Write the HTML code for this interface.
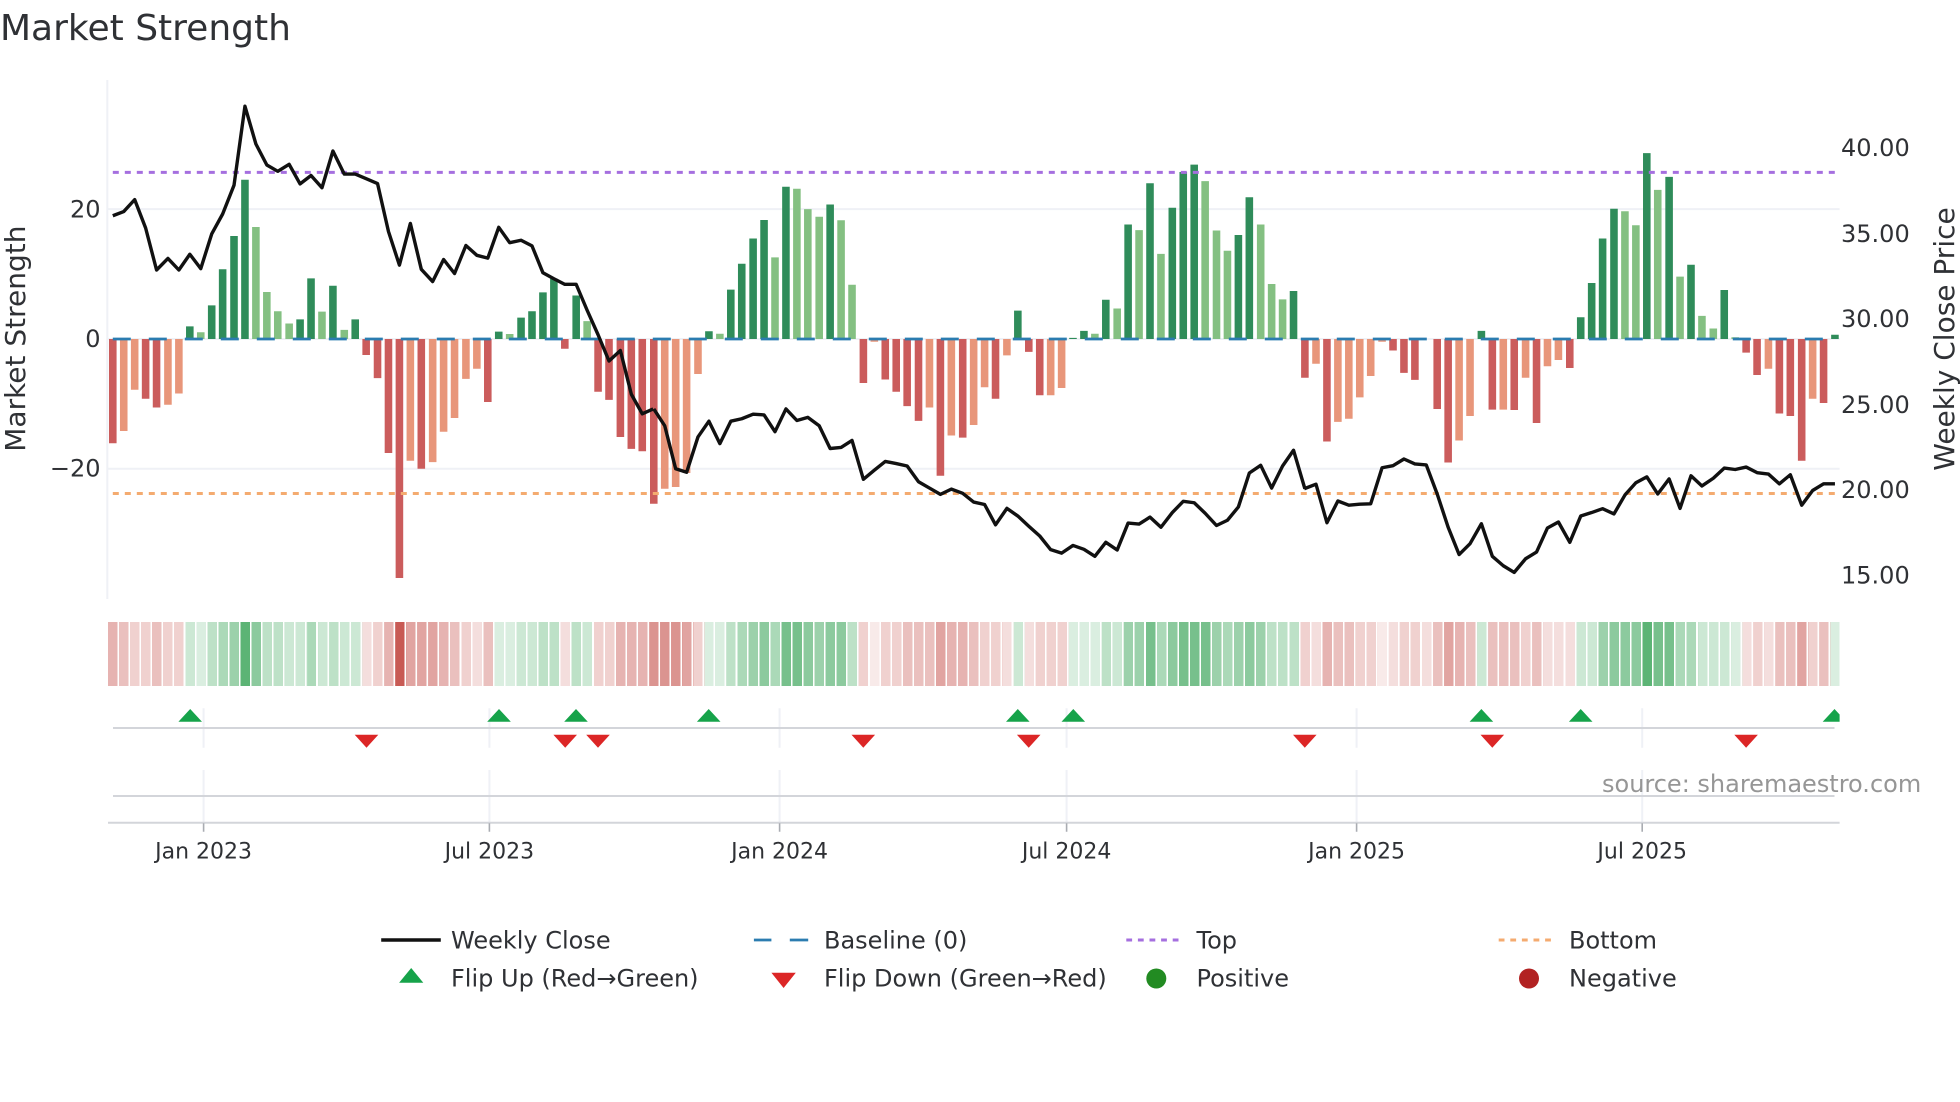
<!DOCTYPE html>
<html><head><meta charset="utf-8"><style>
html,body{margin:0;padding:0;background:#fff}
body{width:1960px;height:1102px;overflow:hidden;position:relative;font-family:"DejaVu Sans",sans-serif}
svg{position:absolute;left:0;top:0}
text{font-family:"DejaVu Sans",sans-serif;fill:#2f3135}
.s{position:absolute;left:108.1px;top:622px;height:64px;display:flex;width:1740px;transform:scaleX(1.0008);transform-origin:0 0}
.s i{display:block;flex:none;width:11.03125px;height:64px}
.o{position:absolute;left:108px;top:622px;height:64px;width:1731.7px;background:repeating-linear-gradient(90deg,transparent 0,transparent 9.5px,#fff 9.5px,#fff 11.04px)}
.c{position:absolute;left:1839.7px;top:622px;width:30px;height:64px;background:#fff}
.r1{background:rgba(200,90,84,.13)}.r2{background:rgba(200,90,84,.2)}.r3{background:rgba(200,90,84,.28)}.r4{background:rgba(200,90,84,.38)}.r5{background:rgba(200,90,84,.46)}.r6{background:rgba(200,90,84,.55)}.r7{background:rgba(200,90,84,.65)}.r8{background:rgba(200,90,84,.75)}.r10{background:rgb(200,90,84)}
.g1{background:rgba(35,154,69,.17)}.g2{background:rgba(35,154,69,.23)}.g3{background:rgba(35,154,69,.3)}.g4{background:rgba(35,154,69,.38)}.g5{background:rgba(35,154,69,.45)}.g6{background:rgba(35,154,69,.52)}.g7{background:rgba(35,154,69,.62)}.g8{background:rgba(35,154,69,.74)}
</style></head><body>
<div class="s"><i class="r5"></i><i class="r4"></i><i class="r3"></i><i class="r3"></i><i class="r4"></i><i class="r3"></i><i class="r3"></i><i class="g2"></i><i class="g1"></i><i class="g3"></i><i class="g4"></i><i class="g5"></i><i class="g8"></i><i class="g6"></i><i class="g3"></i><i class="g3"></i><i class="g2"></i><i class="g2"></i><i class="g4"></i><i class="g2"></i><i class="g3"></i><i class="g2"></i><i class="g2"></i><i class="r2"></i><i class="r3"></i><i class="r5"></i><i class="r10"></i><i class="r6"></i><i class="r6"></i><i class="r6"></i><i class="r5"></i><i class="r4"></i><i class="r3"></i><i class="r2"></i><i class="r4"></i><i class="g1"></i><i class="g1"></i><i class="g2"></i><i class="g2"></i><i class="g3"></i><i class="g3"></i><i class="r2"></i><i class="g3"></i><i class="g2"></i><i class="r3"></i><i class="r3"></i><i class="r5"></i><i class="r5"></i><i class="r5"></i><i class="r7"></i><i class="r7"></i><i class="r7"></i><i class="r6"></i><i class="r3"></i><i class="g1"></i><i class="g1"></i><i class="g3"></i><i class="g4"></i><i class="g5"></i><i class="g6"></i><i class="g4"></i><i class="g7"></i><i class="g7"></i><i class="g6"></i><i class="g5"></i><i class="g6"></i><i class="g6"></i><i class="g3"></i><i class="r3"></i><i class="r1"></i><i class="r3"></i><i class="r3"></i><i class="r4"></i><i class="r4"></i><i class="r4"></i><i class="r6"></i><i class="r5"></i><i class="r5"></i><i class="r4"></i><i class="r3"></i><i class="r3"></i><i class="r2"></i><i class="g2"></i><i class="r2"></i><i class="r3"></i><i class="r3"></i><i class="r3"></i><i class="g1"></i><i class="g1"></i><i class="g1"></i><i class="g3"></i><i class="g2"></i><i class="g5"></i><i class="g5"></i><i class="g7"></i><i class="g4"></i><i class="g6"></i><i class="g7"></i><i class="g7"></i><i class="g7"></i><i class="g5"></i><i class="g4"></i><i class="g5"></i><i class="g6"></i><i class="g5"></i><i class="g3"></i><i class="g3"></i><i class="g3"></i><i class="r3"></i><i class="r2"></i><i class="r5"></i><i class="r4"></i><i class="r4"></i><i class="r3"></i><i class="r3"></i><i class="r1"></i><i class="r2"></i><i class="r3"></i><i class="r3"></i><i class="r2"></i><i class="r4"></i><i class="r6"></i><i class="r5"></i><i class="r4"></i><i class="g2"></i><i class="r4"></i><i class="r4"></i><i class="r4"></i><i class="r3"></i><i class="r4"></i><i class="r2"></i><i class="r2"></i><i class="r2"></i><i class="g2"></i><i class="g2"></i><i class="g5"></i><i class="g6"></i><i class="g6"></i><i class="g6"></i><i class="g8"></i><i class="g7"></i><i class="g7"></i><i class="g4"></i><i class="g4"></i><i class="g2"></i><i class="g2"></i><i class="g2"></i><i class="g1"></i><i class="r2"></i><i class="r3"></i><i class="r2"></i><i class="r4"></i><i class="r4"></i><i class="r6"></i><i class="r3"></i><i class="r4"></i><i class="g1"></i></div>
<div class="o"></div><div class="c"></div>
<svg width="1960" height="1102" viewBox="0 0 1960 1102" xmlns="http://www.w3.org/2000/svg">
<!-- grid -->
<g stroke="#eff1f6" stroke-width="2" fill="none">
<path d="M107.3 80V599M107.3 209.1H1839.6M107.3 468.8H1839.6M107.3 339H1839.6"/>
<path d="M203.6 708.3V747.7M489.4 708.3V747.7M779.6 708.3V747.7M1066.6 708.3V747.7M1356.6 708.3V747.7M1642.2 708.3V747.7M203.6 770V822.7M489.4 770V822.7M779.6 770V822.7M1066.6 770V822.7M1356.6 770V822.7M1642.2 770V822.7"/>
</g>
<!-- bars crop 1 -->
<g transform="translate(0,60) scale(.42088,.35)">
<path fill="#cb5c5c" d="M259 797V1095h18V797zM337 797V968h18V797zM363 797V993h18V797zM861 797V843h18V797zM888 797V909h18V797zM914 797V1123h18V797zM940 797V1480h18V797zM992 797V1168h18V797zM1150 797V977h18V797zM1333 797V825h18V797zM1412 797V948h18V797zM1438 797V971h18V797zM1465 797V1077h18V797zM1491 797V1111h18V797zM1517 797V1118h18V797z"/>
<path fill="#e8967a" d="M285 797V1060h18V797zM311 797V942h18V797zM390 797V985h18V797zM416 797V953h18V797zM966 797V1145h18V797zM1019 797V1149h18V797zM1045 797V1062h18V797zM1071 797V1023h18V797zM1098 797V911h18V797zM1124 797V882h18V797z"/>
<path fill="#2f8c5a" d="M442 797V761h18V797zM494 797V701h18V797zM520 797V598h18V797zM547 797V503h18V797zM573 797V342h18V797zM704 797V741h18V797zM730 797V624h18V797zM782 797V645h18V797zM835 797V741h18V797zM1176 797V776h18V797zM1229 797V736h18V797zM1255 797V718h18V797zM1281 797V664h18V797zM1307 797V625h18V797zM1360 797V673h18V797z"/>
<path fill="#84c082" d="M468 797V778h18V797zM599 797V477h18V797zM625 797V663h18V797zM651 797V718h18V797zM678 797V753h18V797zM756 797V719h18V797zM809 797V771h18V797zM1202 797V783h18V797zM1386 797V746h18V797z"/>
</g>
<!-- bars crop 2 -->
<g transform="translate(650,60) scale(.42088,.35)">
<path fill="#cb5c5c" d="M0 797V1268h18V797zM498 797V923h18V797zM550 797V913h18V797zM576 797V948h18V797zM602 797V989h18V797zM629 797V1031h18V797zM681 797V1188h18V797zM734 797V1079h18V797zM812 797V968h18V797zM891 797V834h18V797zM917 797V958h18V797zM1547 797V908h18V797z"/>
<path fill="#e8967a" d="M26 797V1225h18V797zM52 797V1220h18V797zM78 797V1180h18V797zM105 797V897h18V797zM524 797V805h18V797zM655 797V993h18V797zM707 797V1073h18V797zM760 797V1043h18V797zM786 797V935h18V797zM839 797V844h18V797zM943 797V958h18V797zM969 797V937h18V797z"/>
<path fill="#2f8c5a" d="M131 797V775h18V797zM183 797V656h18V797zM209 797V582h18V797zM236 797V510h18V797zM262 797V457h18V797zM314 797V362h18V797zM419 797V413h18V797zM865 797V716h18V797zM1022 797V774h18V797zM1074 797V685h18V797zM1127 797V470h18V797zM1179 797V352h18V797zM1232 797V422h18V797zM1258 797V320h18V797zM1284 797V299h18V797zM1389 797V500h18V797zM1415 797V392h18V797zM1520 797V660h18V797zM996 797V794h18V797z"/>
<path fill="#84c082" d="M157 797V782h18V797zM288 797V564h18V797zM340 797V368h18V797zM366 797V426h18V797zM393 797V448h18V797zM445 797V458h18V797zM471 797V642h18V797zM1048 797V782h18V797zM1101 797V710h18V797zM1153 797V486h18V797zM1205 797V554h18V797zM1310 797V346h18V797zM1337 797V487h18V797zM1363 797V545h18V797zM1442 797V470h18V797zM1468 797V640h18V797zM1494 797V684h18V797z"/>
</g>
<!-- bars crop 3 -->
<g transform="translate(1300,60) scale(.42088,.35)">
<path fill="#cb5c5c" d="M55 797V1090h18V797zM212 797V830h18V797zM238 797V894h18V797zM264 797V914h18V797zM317 797V997h18V797zM343 797V1150h18V797zM448 797V999h18V797zM500 797V1000h18V797zM553 797V1037h18V797zM632 797V880h18V797zM1051 797V836h18V797zM1077 797V900h18V797zM1130 797V1010h18V797zM1156 797V1017h18V797zM1183 797V1145h18V797zM1235 797V980h18V797z"/>
<path fill="#e8967a" d="M29 797V868h18V797zM81 797V1034h18V797zM107 797V1025h18V797zM133 797V964h18V797zM159 797V903h18V797zM186 797V805h18V797zM369 797V1087h18V797zM395 797V1017h18V797zM474 797V999h18V797zM527 797V908h18V797zM579 797V875h18V797zM605 797V857h18V797zM1104 797V882h18V797zM1209 797V968h18V797z"/>
<path fill="#2f8c5a" d="M422 797V774h18V797zM658 797V735h18V797zM684 797V637h18V797zM710 797V510h18V797zM737 797V425h18V797zM815 797V266h18V797zM868 797V334h18V797zM920 797V585h18V797zM999 797V657h18V797zM1262 797V785h18V797z"/>
<path fill="#84c082" d="M763 797V432h18V797zM789 797V472h18V797zM841 797V371h18V797zM894 797V619h18V797zM946 797V731h18V797zM973 797V767h18V797zM1025 797V792h18V797z"/>
</g>
<!-- reference lines -->
<line x1="112.8" y1="339" x2="1835" y2="339" stroke="#2b7cb0" stroke-width="2.8" stroke-dasharray="18 18"/>
<line x1="112.8" y1="172.4" x2="1835" y2="172.4" stroke="#a56fdf" stroke-width="3" stroke-dasharray="6 6"/>
<line x1="112.8" y1="493.5" x2="1835" y2="493.5" stroke="#f4ab70" stroke-width="3" stroke-dasharray="6 6"/>
<!-- close line -->
<g fill="none" stroke="#111" stroke-width="3.4" stroke-linejoin="round">
<polyline vector-effect="non-scaling-stroke" transform="translate(0,60) scale(.42088,.35)" points="268,445 294,433 320,399 346,480 372,600 399,567 425,600 451,555 477,596 503,497 529,440 556,358 582,132 608,240 634,300 660,318 687,298 713,354 739,330 765,365 791,260 818,326 844,326 870,339 897,353 923,490 949,586 975,467 1001,598 1028,633 1054,570 1080,610 1107,530 1133,558 1159,566 1185,478 1211,522 1238,515 1264,531 1290,608 1316,625 1342,641 1369,641 1395,715 1421,785 1447,860 1474,830 1500,955 1526,1011 1552,997"/>
<polyline vector-effect="non-scaling-stroke" transform="translate(650,60) scale(.42088,.35)" points="9,997 35,1045 61,1168 87,1178 114,1077 140,1032 166,1096 192,1032 218,1025 245,1012 271,1014 297,1062 323,997 349,1030 375,1021 402,1045 428,1110 454,1107 480,1087 507,1198 533,1172 559,1147 585,1153 611,1160 638,1205 664,1223 690,1241 716,1226 743,1238 769,1263 795,1270 821,1328 848,1281 874,1303 900,1332 926,1360 952,1399 978,1409 1005,1387 1031,1398 1057,1418 1083,1378 1110,1400 1136,1323 1162,1326 1188,1306 1214,1335 1241,1293 1267,1261 1293,1265 1319,1295 1346,1330 1372,1315 1398,1277 1424,1180 1451,1158 1477,1223 1503,1160 1529,1115 1556,1225"/>
<polyline vector-effect="non-scaling-stroke" transform="translate(1300,60) scale(.42088,.35)" points="10,1225 38,1212 64,1322 90,1260 116,1272 142,1269 168,1268 195,1165 221,1159 247,1140 273,1154 300,1157 326,1240 352,1335 378,1413 404,1382 431,1325 457,1418 483,1445 509,1464 536,1425 562,1406 588,1337 614,1320 641,1378 667,1303 693,1293 719,1282 746,1297 772,1243 798,1208 824,1191 850,1240 877,1197 903,1281 929,1188 955,1217 982,1195 1008,1166 1034,1170 1060,1163 1086,1179 1113,1183 1139,1211 1165,1185 1192,1272 1218,1230 1244,1211 1271,1211"/>
</g>
<!-- marker rows -->
<g stroke="#d3d5da" stroke-width="2" fill="none">
<path d="M113 728H1834.5M113 796H1834.5M108 822.7H1839.6"/>
</g>
<path d="M203.6 823.3V831.7M489.4 823.3V831.7M779.6 823.3V831.7M1066.6 823.3V831.7M1356.6 823.3V831.7M1642.2 823.3V831.7" stroke="#a9acb2" stroke-width="1.6" fill="none"/>
<g fill="#16a34a">
<path d="M190.2 709l11.8 12.7h-23.6zM499 709l11.8 12.7h-23.6zM576 709l11.8 12.7h-23.6zM708.7 709l11.8 12.7h-23.6zM1017.8 709l11.8 12.7h-23.6zM1073.3 709l11.8 12.7h-23.6zM1481.4 709l11.8 12.7h-23.6zM1580.7 709l11.8 12.7h-23.6zM1834.5 709l5.1 5.5V721.7H1822.7z"/>
</g>
<g fill="#dc2626">
<path d="M366.5 747.7l-11.8 -13h23.6zM565.2 747.7l-11.8 -13h23.6zM598 747.7l-11.8 -13h23.6zM863.3 747.7l-11.8 -13h23.6zM1028.7 747.7l-11.8 -13h23.6zM1304.8 747.7l-11.8 -13h23.6zM1492.3 747.7l-11.8 -13h23.6zM1746.1 747.7l-11.8 -13h23.6z"/>
</g>
<!-- texts -->
<text x="0" y="40" font-size="36">Market Strength</text>
<text transform="translate(25 338.6) rotate(-90)" text-anchor="middle" font-size="28">Market Strength</text>
<text transform="translate(1954 339) rotate(-90)" text-anchor="middle" font-size="28">Weekly Close Price</text>
<g font-size="24" text-anchor="end">
<text x="100.5" y="217.5">20</text><text x="100.5" y="347">0</text><text x="100.5" y="476.5">−20</text>
</g>
<g font-size="24">
<text x="1841" y="156">40.00</text><text x="1841" y="242">35.00</text><text x="1841" y="327">30.00</text><text x="1841" y="413">25.00</text><text x="1841" y="498">20.00</text><text x="1841" y="583.6">15.00</text>
</g>
<g font-size="22" text-anchor="middle">
<text x="203.6" y="858.3">Jan 2023</text><text x="489.4" y="858.3">Jul 2023</text><text x="779.6" y="858.3">Jan 2024</text><text x="1066.6" y="858.3">Jul 2024</text><text x="1356.6" y="858.3">Jan 2025</text><text x="1642.2" y="858.3">Jul 2025</text>
</g>
<text x="1602" y="792" font-size="24" style="fill:#969696">source: sharemaestro.com</text>
<!-- legend -->
<line x1="381.2" y1="940" x2="440.8" y2="940" stroke="#111" stroke-width="3.4"/>
<path d="M753.9 940H771.4M789.8 940H808.2" stroke="#2b7cb0" stroke-width="2.8" fill="none"/>
<line x1="1126.3" y1="940" x2="1180.8" y2="940" stroke="#a56fdf" stroke-width="3" stroke-dasharray="5.8 5.8"/>
<line x1="1498.7" y1="940" x2="1553.6" y2="940" stroke="#f4ab70" stroke-width="3" stroke-dasharray="5.8 5.8"/>
<path d="M411.2 968l12.1 14.7h-24.2z" fill="#16a34a"/>
<path d="M783.6 988l-12.2 -15.3h24.4z" fill="#dc2626"/>
<ellipse cx="1156.3" cy="978.5" rx="10" ry="10" fill="#228b22"/>
<ellipse cx="1529" cy="978.5" rx="10" ry="10" fill="#b22222"/>
<g font-size="24">
<text x="451" y="948.5">Weekly Close</text><text x="824" y="948.5">Baseline (0)</text><text x="1196.5" y="948.5">Top</text><text x="1569" y="948.5">Bottom</text>
<text x="451" y="986.5">Flip Up (Red→Green)</text><text x="824" y="986.5">Flip Down (Green→Red)</text><text x="1196.5" y="986.5">Positive</text><text x="1569" y="986.5">Negative</text>
</g>
</svg>
</body></html>
